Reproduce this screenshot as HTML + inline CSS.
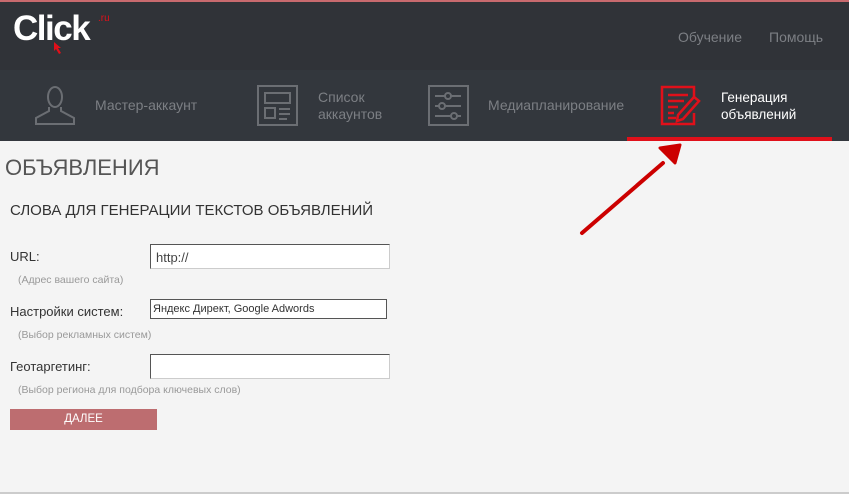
<!DOCTYPE html>
<html><head><meta charset="utf-8"><style>
*{margin:0;padding:0;box-sizing:border-box}
body{width:849px;height:494px;background:#f4f4f4;font-family:"Liberation Sans","DejaVu Sans",sans-serif;position:relative;overflow:hidden}
.top{position:absolute;left:0;top:0;width:849px;height:70px;background:#303338;border-top:2px solid #c86a6e}
.nav{position:absolute;left:0;top:70px;width:849px;height:71px;background:#33373d}
.a{position:absolute;color:#7c7f84;font-size:14px}
.t{position:absolute;font-size:13px;color:#333}
.h{position:absolute;font-size:10.5px;color:#999}
.in{position:absolute;background:#fff;border:1px solid #ccc;border-top-color:#555;border-left-color:#555}
</style></head><body>
<div class="top">
<div style="position:absolute;left:13px;top:7px;color:#fff;font-size:35px;font-weight:bold;letter-spacing:-1.5px">Click</div>
<div style="position:absolute;left:98px;top:11px;color:#e0101a;font-size:10px">.ru</div>
<svg style="position:absolute;left:53px;top:39px" width="10" height="14"><path d="M1 1 L1 10 L3 8 L6 13 L8 12 L5 7 L8 7Z" fill="#e0101a"/></svg>
<div class="a" style="left:678px;top:27px">Обучение</div>
<div class="a" style="left:769px;top:27px">Помощь</div>
</div>
<div class="nav">
<svg style="position:absolute;left:34px;top:14px" width="42" height="42" fill="none" stroke="#6b6e73" stroke-width="2"><ellipse cx="21" cy="13" rx="7" ry="10"/><path d="M15 23 L15 27 L2 34 L2 40 L40 40 L40 34 L27 27 L27 23"/></svg>
<div class="a" style="left:95px;top:27px">Мастер-аккаунт</div>
<svg style="position:absolute;left:257px;top:15px" width="41" height="41" fill="none" stroke="#6b6e73" stroke-width="2"><rect x="1" y="1" width="39" height="39"/><rect x="8" y="8" width="25" height="10"/><rect x="8" y="23" width="10" height="10"/><path d="M22 24h11M22 29h11M22 34h8"/></svg>
<div class="a" style="left:318px;top:19px;line-height:17px">Список<br>аккаунтов</div>
<svg style="position:absolute;left:428px;top:15px" width="41" height="41" fill="none" stroke="#6b6e73" stroke-width="2"><rect x="1" y="1" width="39" height="39"/><path d="M7 11h26M7 21h26M7 31h26"/><circle cx="20" cy="11" r="3" fill="#33373d"/><circle cx="14" cy="21" r="3" fill="#33373d"/><circle cx="26" cy="31" r="3" fill="#33373d"/></svg>
<div class="a" style="left:488px;top:27px">Медиапланирование</div>
<svg style="position:absolute;left:660px;top:15px" width="42" height="41" fill="none" stroke="#e0101a" stroke-width="2.5"><path d="M34 12V2H2V39H34V28"/><path d="M8 10h20M8 16h16M8 22h10M8 28h6M8 33h8"/><path d="M18 30 L34 12 L39 16 L23 34 L17 36Z"/></svg>
<div style="position:absolute;left:721px;top:19px;line-height:17px;color:#fff;font-size:13.5px">Генерация<br>объявлений</div>
<div style="position:absolute;left:627px;top:67px;width:205px;height:4px;background:#e0101a"></div>
</div>
<div style="position:absolute;left:5px;top:155px;font-size:22px;color:#555">ОБЪЯВЛЕНИЯ</div>
<div style="position:absolute;left:10px;top:202px;font-size:15px;color:#333">СЛОВА ДЛЯ ГЕНЕРАЦИИ ТЕКСТОВ ОБЪЯВЛЕНИЙ</div>
<div class="t" style="left:10px;top:249px">URL:</div>
<div class="h" style="left:18px;top:274px">(Адрес вашего сайта)</div>
<div class="in" style="left:150px;top:244px;width:240px;height:25px;font-size:13px;color:#444;padding:5px 5px">http://</div>
<div class="t" style="left:10px;top:304px">Настройки систем:</div>
<div class="h" style="left:18px;top:329px">(Выбор рекламных систем)</div>
<div class="in" style="left:150px;top:299px;width:237px;height:20px;font-size:11px;color:#333;padding:3px 2px;border-color:#555">Яндекс Директ, Google Adwords</div>
<div class="t" style="left:10px;top:359px">Геотаргетинг:</div>
<div class="h" style="left:18px;top:384px">(Выбор региона для подбора ключевых слов)</div>
<div class="in" style="left:150px;top:354px;width:240px;height:25px"></div>
<div style="position:absolute;left:10px;top:409px;width:147px;height:21px;background:#bd6d70;color:#fff;font-size:11.5px;text-align:center;line-height:21px">ДАЛЕЕ</div>
<svg style="position:absolute;left:560px;top:130px" width="140" height="120"><path d="M22 103 L103 33" stroke="#c00" stroke-width="4" stroke-linecap="round"/><path d="M120 15 L100 18 L115 33Z" fill="#c00" stroke="#c00" stroke-width="3" stroke-linejoin="round"/></svg>
<div style="position:absolute;left:0;top:492px;width:849px;height:2px;background:#ccc"></div>
</body></html>
